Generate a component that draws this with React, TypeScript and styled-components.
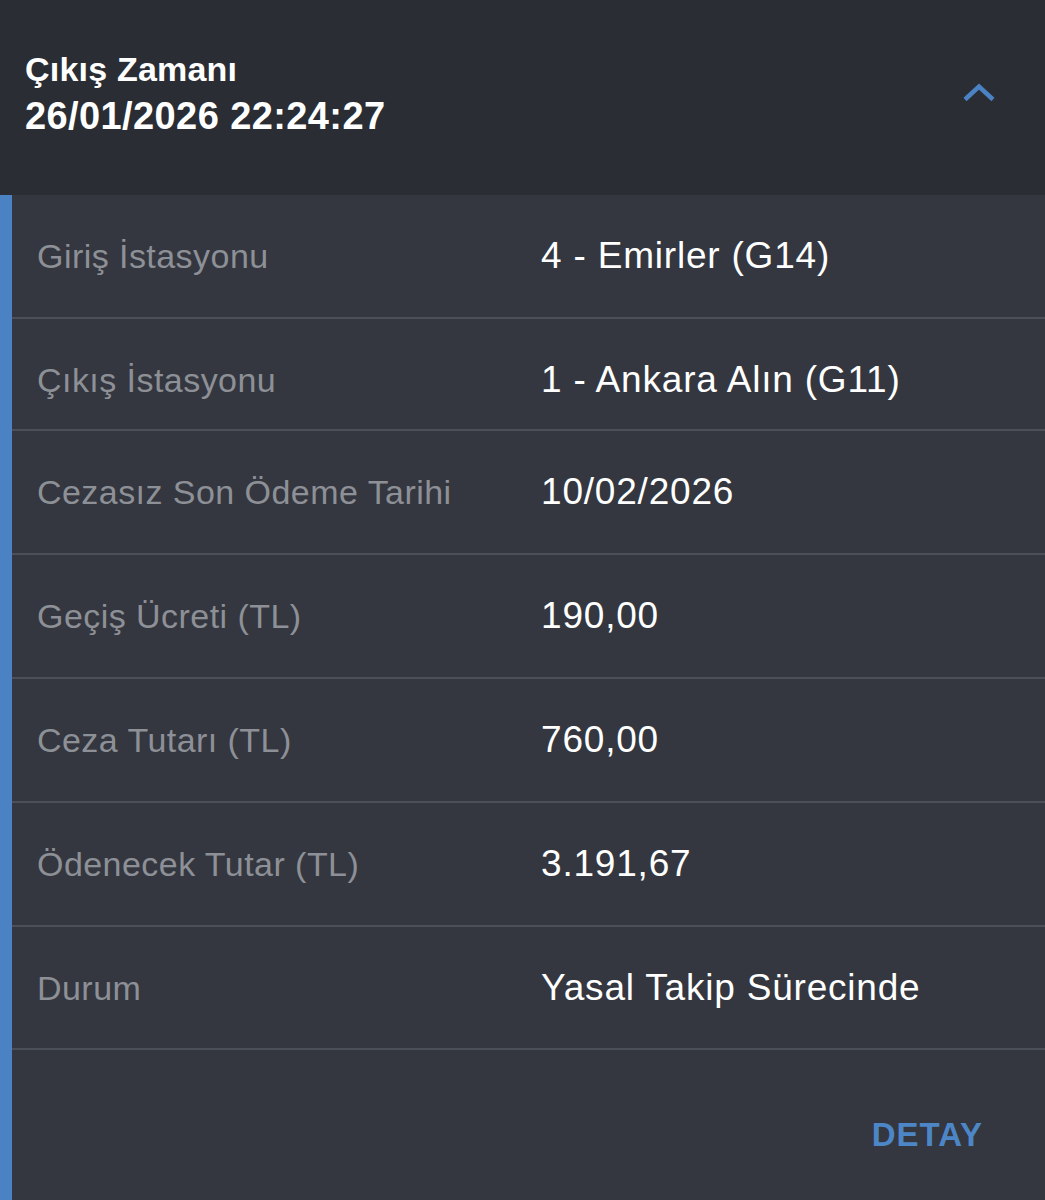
import styled, { createGlobalStyle } from "styled-components";

const GlobalStyle = createGlobalStyle`
  html, body {
    margin: 0;
    padding: 0;
    background: #34373f;
  }
  body {
    font-family: "Liberation Sans", Arial, Helvetica, sans-serif;
    -webkit-font-smoothing: antialiased;
  }
`;

const Card = styled.div`
  width: 1045px;
  min-height: 1200px;
  background: #34373f;
`;

const Header = styled.div`
  height: 195px;
  box-sizing: border-box;
  padding: 47px 48px 0 25px;
  background: #2a2d34;
  display: flex;
  justify-content: space-between;
  align-items: flex-start;
`;

const HeaderText = styled.div`
  display: flex;
  flex-direction: column;
  color: #ffffff;
  font-weight: 700;
`;

const Title = styled.div`
  font-size: 34px;
  line-height: 44px;
  letter-spacing: 0.2px;
`;

const DateTime = styled.div`
  font-size: 38px;
  line-height: 50px;
  letter-spacing: 0.4px;
`;

const Toggle = styled.button`
  margin-top: 33px;
  width: 36px;
  height: 24px;
  padding: 0;
  border: 0;
  background: none;
  display: flex;
  align-items: center;
  justify-content: center;
  cursor: pointer;
`;

const Body = styled.div`
  border-left: 12px solid #4b82c3;
  min-height: 1005px;
`;

const Row = styled.div<{ $height: number }>`
  height: ${({ $height }) => $height}px;
  box-sizing: border-box;
  padding: 44px 0 0 25px;
  border-bottom: 2px solid #4b4f57;
  display: grid;
  grid-template-columns: 504px 1fr;
  align-items: baseline;
`;

const Label = styled.div`
  font-size: 34px;
  line-height: 34px;
  letter-spacing: 0.45px;
  color: #8d9096;
`;

const Value = styled.div`
  font-size: 37px;
  line-height: 34px;
  letter-spacing: 0.8px;
  color: #ffffff;
`;

const Footer = styled.div`
  display: flex;
  justify-content: flex-end;
  padding: 68px 62px 0 0;
`;

const DetailButton = styled.button`
  border: 0;
  background: none;
  padding: 0;
  font-family: inherit;
  font-size: 33px;
  line-height: 34px;
  font-weight: 700;
  letter-spacing: 1px;
  color: #4d86c7;
  cursor: pointer;
`;

const rows = [
  { label: "Giriş İstasyonu", value: "4 - Emirler (G14)", height: 124 },
  { label: "Çıkış İstasyonu", value: "1 - Ankara Alın (G11)", height: 112 },
  { label: "Cezasız Son Ödeme Tarihi", value: "10/02/2026", height: 124 },
  { label: "Geçiş Ücreti (TL)", value: "190,00", height: 124 },
  { label: "Ceza Tutarı (TL)", value: "760,00", height: 124 },
  { label: "Ödenecek Tutar (TL)", value: "3.191,67", height: 124 },
  { label: "Durum", value: "Yasal Takip Sürecinde", height: 123 },
];

const ChevronUp = () => (
  <svg width="34" height="20" viewBox="0 0 34 20" fill="none">
    <path
      d="M3 17.5 L17 4.5 L31 17.5"
      stroke="#4b82c3"
      strokeWidth="4.5"
      strokeLinecap="butt"
      strokeLinejoin="miter"
    />
  </svg>
);

const App = () => {
  return (
    <>
      <GlobalStyle />
      <Card>
        <Header>
          <HeaderText>
            <Title>Çıkış Zamanı</Title>
            <DateTime>26/01/2026 22:24:27</DateTime>
          </HeaderText>
          <Toggle aria-label="Kapat">
            <ChevronUp />
          </Toggle>
        </Header>
        <Body>
          {rows.map((row) => (
            <Row key={row.label} $height={row.height}>
              <Label>{row.label}</Label>
              <Value>{row.value}</Value>
            </Row>
          ))}
          <Footer>
            <DetailButton>DETAY</DetailButton>
          </Footer>
        </Body>
      </Card>
    </>
  );
};

export default App;
